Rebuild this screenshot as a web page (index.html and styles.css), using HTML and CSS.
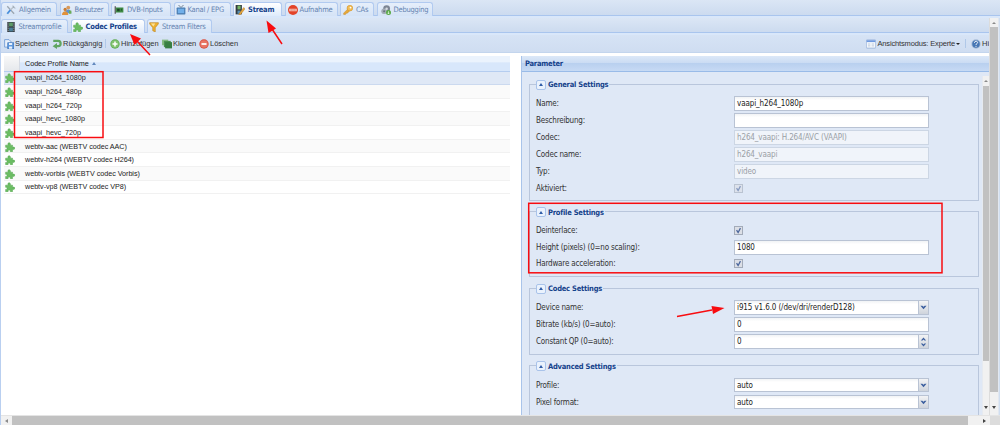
FILE: index.html
```html
<!DOCTYPE html>
<html lang="de">
<head>
    <meta charset="UTF-8">
    <title>Tvheadend</title>
    <link rel="stylesheet" href="styles.css">
</head>
<body>

    <!-- Icons -->
    <svg class="defs">
        <symbol id="i-tools" viewBox="0 0 16 16"><path d="M2 2l11 12" stroke="#9aa5b0" stroke-width="2"/><path d="M13 2L7 8" stroke="#b9c2cb" stroke-width="2.4"/><path d="M7 8l-5 6" stroke="#4a8fdb" stroke-width="3"/><path d="M11 1l1 3 3 1" fill="none" stroke="#9aa5b0" stroke-width="1.5"/></symbol>
        <symbol id="i-users" viewBox="0 0 16 16"><circle cx="10" cy="4" r="3" fill="#d99a5b"/><path d="M5 13c0-8 10-8 10 0z" fill="#5c93d4"/><circle cx="5" cy="7" r="2.6" fill="#c97c33"/><path d="M0 16c0-8 10-8 10 0z" fill="#e0913a"/><path d="M11 9h4v5h-4z" fill="#6fae54"/></symbol>
        <symbol id="i-card" viewBox="0 0 16 16"><path d="M1 2h2v12H1z" fill="#555"/><path d="M3 4h12v8H3z" fill="#3f8b45"/><path d="M5 6h4v4H5z" fill="#1f4526"/><path d="M11 6h2v3h-2z" fill="#255a2c"/></symbol>
        <symbol id="i-tv" viewBox="0 0 16 16"><path d="M4 0l4 4 4-4" fill="none" stroke="#596a7a" stroke-width="1.3"/><rect x="1" y="4" width="14" height="11" rx="1" fill="#4d7eb1"/><rect x="3" y="6" width="10" height="7" fill="#71afe9"/></symbol>
        <symbol id="i-film" viewBox="0 0 16 16"><path d="M2 0h12v16H2z" fill="#343c42"/><path d="M5 1h6v6H5z" fill="#5d9b67"/><path d="M5 9h6v6H5z" fill="#4d8099"/><path d="M3.5 1v14M12.5 1v14" stroke="#d8dde0" stroke-width="1" stroke-dasharray="1.5 1.5"/></symbol>
        <symbol id="i-filmedit" viewBox="0 0 16 16"><path d="M1 0h10v15H1z" fill="#343c42"/><path d="M4 1h5v6H4z" fill="#75b565"/><path d="M4 9h5v5H4z" fill="#5791b5"/><path d="M14 4l-7 9-1 3 3-1 7-9z" fill="#e8a93c" stroke="#b47626" stroke-width=".7"/></symbol>
        <symbol id="i-rec" viewBox="0 0 16 16"><circle cx="8" cy="8" r="8" fill="#e34328"/><path d="M2 6h12v4H2z" fill="#f5c9be"/><path d="M4 8h8" stroke="#d9583f" stroke-width="1.5" stroke-dasharray="2 1"/></symbol>
        <symbol id="i-key" viewBox="0 0 16 16"><path d="M8 6l-7 7v2h3l1-2h2l4-4z" fill="#e6a93a" stroke="#c98b26" stroke-width=".8"/><circle cx="11" cy="5" r="4.500" fill="#f2bd55" stroke="#d3952c"/><circle cx="12" cy="4" r="1.400" fill="#fff"/></symbol>
        <symbol id="i-bug" viewBox="0 0 16 16"><circle cx="9" cy="6" r="5.5" fill="#7d8694"/><circle cx="5" cy="10" r="4.5" fill="#a3abb6"/><circle cx="9" cy="6" r="2" fill="#d7dce2"/><circle cx="5" cy="10" r="1.6" fill="#69717e"/><circle cx="12" cy="12" r="4" fill="#58a945"/><path d="M12 10v4M10.500 12.500l1.500 1.800 1.500-1.800" stroke="#fff" fill="none"/></symbol>
        <symbol id="i-plugin" viewBox="0 0 16 16"><path d="M1 5h4C3 0 10 0 8.500 5H12v3.500c5-2 5 5 0 3V15.500H8.500c1-3.500-4.500-3.500-3.500 0H1V12c3 .5 3-4 0-3.500z" fill="#6bbd63" stroke="#55a450" stroke-width=".8"/></symbol>
        <symbol id="i-funnel" viewBox="0 0 16 16"><path d="M1 1h14v2l-5 6v7l-4-2V9L1 3z" fill="#edb030" stroke="#b98320" stroke-width=".9"/><path d="M3 2.500h7L7 7z" fill="#fbe29a"/></symbol>
        <symbol id="i-save" viewBox="0 0 16 16"><path d="M1 1h7l3 3v9H1z" fill="#e9f1fb" stroke="#5f8fcf" stroke-width="1.2"/><rect x="6" y="6" width="9.500" height="9.500" fill="#5e98de" stroke="#3c72b8"/><path d="M8 6.500h5v3H8zM8 12h5v3.500H8z" fill="#e8f1fc"/></symbol>
        <symbol id="i-undo" viewBox="0 0 16 16"><path d="M2 3h8c5 0 5 8.500 0 8.500H6" fill="none" stroke="#5fa562" stroke-width="3.600"/><path d="M8 6.500V16l-7-4.500z" fill="#5fa562"/></symbol>
        <symbol id="i-add" viewBox="0 0 16 16"><circle cx="8" cy="8" r="7.500" fill="#62ae55"/><circle cx="8" cy="8" r="6" fill="#82c26f"/><path d="M8 4v8M4 8h8" stroke="#fff" stroke-width="2.400"/></symbol>
        <symbol id="i-clone" viewBox="0 0 16 16"><path d="M0 1h10v9H0z" fill="#87bb83"/><path d="M3 3h11v10H3z" fill="#4d9150"/><path d="M5 5h11v10H5z" fill="#397f43"/></symbol>
        <symbol id="i-del" viewBox="0 0 16 16"><circle cx="8" cy="8" r="7.500" fill="#d9503f"/><circle cx="8" cy="8" r="6" fill="#e87564"/><path d="M4 8h8" stroke="#fff" stroke-width="2.800"/></symbol>
        <symbol id="i-view" viewBox="0 0 16 14"><rect x=".5" y=".5" width="15" height="13" rx="1" fill="#f7fafd" stroke="#7f9ed0"/><path d="M1 1h14v3H1z" fill="#6f9ae0"/><path d="M3 7h4M3 10h4M9 7h4M9 10h4" stroke="#a9bad2" stroke-width="1.200"/></symbol>
        <symbol id="i-help" viewBox="0 0 16 16"><circle cx="8" cy="8" r="7.500" fill="#a9bdd8"/><circle cx="8" cy="8" r="6" fill="#4777b5"/><path d="M5.500 6c0-3.500 5.500-3 5 0-.3 1.500-2.500 1.500-2.500 3.500M8 11v1.500" fill="none" stroke="#fff" stroke-width="1.600"/></symbol>
        <symbol id="i-down" viewBox="0 0 8 8"><path d="M.500 2h2.200L4 3.200 5.300 2h2.200L4 6z" fill="#3c5f9f"/></symbol>
    </svg>

    <!-- Main tabs -->
    <div class="tabs main-tabs">
        <div class="tab t-allgemein"><svg><use href="#i-tools"/></svg><span>Allgemein</span></div>
        <div class="tab t-benutzer"><svg><use href="#i-users"/></svg><span>Benutzer</span></div>
        <div class="tab t-dvb"><svg><use href="#i-card"/></svg><span>DVB-Inputs</span></div>
        <div class="tab t-kanal"><svg><use href="#i-tv"/></svg><span>Kanal / EPG</span></div>
        <div class="tab t-stream active"><svg><use href="#i-filmedit"/></svg><span>Stream</span></div>
        <div class="tab t-aufnahme"><svg><use href="#i-rec"/></svg><span>Aufnahme</span></div>
        <div class="tab t-cas"><svg><use href="#i-key"/></svg><span>CAs</span></div>
        <div class="tab t-debug"><svg><use href="#i-bug"/></svg><span>Debugging</span></div>
    </div>

    <div class="main">
        <div class="content">
            <div class="tabs sub-tabs">
                <div class="tab t-streamprofile"><svg><use href="#i-film"/></svg><span>Streamprofile</span></div>
                <div class="tab t-codec active"><svg><use href="#i-plugin"/></svg><span>Codec Profiles</span></div>
                <div class="tab t-filters"><svg><use href="#i-funnel"/></svg><span>Stream Filters</span></div>
            </div>

            <div class="toolbar">
                <div class="btn b-save"><svg><use href="#i-save"/></svg>Speichern</div>
                <div class="btn b-undo"><svg><use href="#i-undo"/></svg>Rückgängig</div>
                <div class="sep"></div>
                <div class="btn b-add"><svg><use href="#i-add"/></svg>Hinzufügen</div>
                <div class="btn b-clone"><svg><use href="#i-clone"/></svg>Klonen</div>
                <div class="btn b-del"><svg><use href="#i-del"/></svg>Löschen</div>
                <div class="fill"></div>
                <div class="btn b-view"><svg><use href="#i-view"/></svg>Ansichtsmodus: Experte<i class="caret"></i></div>
                <div class="sep"></div>
                <div class="btn b-help"><svg><use href="#i-help"/></svg>Hi</div>
            </div>

            <div class="panels">
                <div class="grid">
                    <div class="grid-head"><div class="head-icon"></div><div class="head-name">Codec Profile Name<i class="sort"></i></div></div>
                    <div class="row selected"><svg><use href="#i-plugin"/></svg>vaapi_h264_1080p</div>
                    <div class="row"><svg><use href="#i-plugin"/></svg>vaapi_h264_480p</div>
                    <div class="row"><svg><use href="#i-plugin"/></svg>vaapi_h264_720p</div>
                    <div class="row"><svg><use href="#i-plugin"/></svg>vaapi_hevc_1080p</div>
                    <div class="row"><svg><use href="#i-plugin"/></svg>vaapi_hevc_720p</div>
                    <div class="row"><svg><use href="#i-plugin"/></svg>webtv-aac (WEBTV codec AAC)</div>
                    <div class="row"><svg><use href="#i-plugin"/></svg>webtv-h264 (WEBTV codec H264)</div>
                    <div class="row"><svg><use href="#i-plugin"/></svg>webtv-vorbis (WEBTV codec Vorbis)</div>
                    <div class="row"><svg><use href="#i-plugin"/></svg>webtv-vp8 (WEBTV codec VP8)</div>
                </div>

                <div class="params">
                    <div class="params-head">Parameter</div>
                    <div class="params-body">
                        <div class="form">
                            <div class="set general">
                                <div class="legend"><i class="toggle"></i>General Settings</div>
                                <div class="field"><label>Name:</label><div class="input">vaapi_h264_1080p</div></div>
                                <div class="field"><label>Beschreibung:</label><div class="input"></div></div>
                                <div class="field"><label>Codec:</label><div class="input disabled">h264_vaapi: H.264/AVC (VAAPI)</div></div>
                                <div class="field"><label>Codec name:</label><div class="input disabled">h264_vaapi</div></div>
                                <div class="field"><label>Typ:</label><div class="input disabled">video</div></div>
                                <div class="field"><label>Aktiviert:</label><div class="check disabled"><svg viewBox="0 0 9 9"><path d="M2 4l2 3 3-5.500"/></svg></div></div>
                            </div>
                            <div class="set profile">
                                <div class="legend"><i class="toggle"></i>Profile Settings</div>
                                <div class="field"><label>Deinterlace:</label><div class="check"><svg viewBox="0 0 9 9"><path d="M2 4l2 3 3-5.500"/></svg></div></div>
                                <div class="field"><label>Height (pixels) (0=no scaling):</label><div class="input">1080</div></div>
                                <div class="field"><label>Hardware acceleration:</label><div class="check"><svg viewBox="0 0 9 9"><path d="M2 4l2 3 3-5.500"/></svg></div></div>
                            </div>
                            <div class="set codec">
                                <div class="legend"><i class="toggle"></i>Codec Settings</div>
                                <div class="field"><label>Device name:</label><div class="input combo">i915 v1.6.0 (/dev/dri/renderD128)</div><div class="trigger"><svg><use href="#i-down"/></svg></div></div>
                                <div class="field"><label>Bitrate (kb/s) (0=auto):</label><div class="input">0</div></div>
                                <div class="field"><label>Constant QP (0=auto):</label><div class="input combo">0</div><div class="trigger spin"><svg class="up"><use href="#i-down"/></svg><svg><use href="#i-down"/></svg></div></div>
                            </div>
                            <div class="set advanced">
                                <div class="legend"><i class="toggle"></i>Advanced Settings</div>
                                <div class="field"><label>Profile:</label><div class="input combo">auto</div><div class="trigger"><svg><use href="#i-down"/></svg></div></div>
                                <div class="field"><label>Pixel format:</label><div class="input combo">auto</div><div class="trigger"><svg><use href="#i-down"/></svg></div></div>
                            </div>
                        </div>
                        <div class="vscroll inner"><i class="arrow-up"></i><div class="thumb"></div><i class="arrow-down"></i></div>
                    </div>
                </div>
            </div>
        </div>
        <div class="vscroll outer"><i class="arrow-up"></i><div class="thumb"></div><i class="arrow-down"></i></div>
    </div>

    <div class="hscroll"><i class="arrow-left"></i><div class="thumb"></div><i class="arrow-right"></i><div class="corner"></div></div>

    <!-- Red markers over the page -->
    <svg class="marks" viewBox="0 0 1000 425">
        <rect x="14.500" y="71.700" width="88.500" height="65.800"/>
        <rect x="528.700" y="203.300" width="413.300" height="69.500"/>
        <path d="M282 44L272 29M150 55L137 41M677 316.500L712 310"/>
        <polygon points="266.500,20.500 276,28.500 268.500,33"/>
        <polygon points="130,34 141,38.500 134.500,45"/>
        <polygon points="724.500,308 711.500,306 713,314"/>
    </svg>

</body>
</html>
```
FILE: styles.css
```css
* {
    box-sizing: border-box;
}

body {
    margin: 0;
    width: 1000px;
    height: 425px;
    overflow: hidden;
    position: relative;
    display: flex;
    flex-direction: column;
    background: #d0def0;
    border-left: 1px solid #b9cff0;
    font-family: "DejaVu Sans Condensed", "DejaVu Sans", sans-serif;
    font-stretch: condensed;
    font-size: 7.5px;
    letter-spacing: -0.22px;
    color: #333;
    white-space: nowrap;
}

.defs {
    position: absolute;
    width: 0;
    height: 0;
}

/* Tabs */
.tabs {
    display: flex;
    align-items: flex-end;
    flex: none;
    background: linear-gradient(#dbe6f5, #cbdaef);
    border-bottom: 2px solid #d9e7fa;
}

.main-tabs {
    height: 18px;
    padding-top: 2px;
    box-shadow: inset 0 -1px 0 #a9c5ee;
}

.sub-tabs {
    height: 17px;
    box-shadow: inset 0 -1px 0 #a9c5ee;
}

.tab {
    display: flex;
    align-items: center;
    height: 14px;
    margin-right: 2.5px;
    padding-left: 4px;
    flex: none;
    border: 1px solid #b1caf0;
    border-bottom: 0;
    border-radius: 3px 3px 0 0;
    background: linear-gradient(#e6effb, #d5e3f6);
    color: #6483b1;
}

.tab svg {
    width: 10px;
    height: 10px;
    margin-right: 3px;
}

.tab.active {
    background: linear-gradient(#fff, #dfebfb);
    color: #15428b;
    font-weight: bold;
}

.t-allgemein { width: 56px; }
.t-benutzer { width: 49px; padding-left: 1px; }
.t-dvb { width: 60px; padding-left: 2px; }
.t-kanal { width: 57px; padding-left: 1px; }
.t-kanal svg { margin-right: 2px; }
.t-stream { width: 49px; padding-left: 1px; }
.t-aufnahme { width: 53px; padding-left: 2px; }
.t-aufnahme svg { margin-right: 2px; }
.t-cas { width: 34px; padding-left: 2px; }
.t-debug { width: 56px; padding-left: 3px; }
.t-streamprofile { width: 67px; }
.t-streamprofile svg { margin-right: 2.5px; }
.t-codec { width: 74px; padding-left: 1px; }
.t-filters { width: 65px; padding-left: 1px; }

/* Toolbar */
.main {
    display: flex;
    height: 397px;
    flex: none;
}

.content {
    width: 988px;
    overflow: hidden;
}

.toolbar {
    display: flex;
    align-items: center;
    height: 18px;
    padding-left: 3px;
    background: linear-gradient(#d6e3f5, #cfddf1);
    border-bottom: 1px solid #c3d5ed;
    font-family: "Liberation Sans", Arial, sans-serif;
    font-size: 7.5px;
    letter-spacing: -0.03px;
}

.btn {
    display: flex;
    align-items: center;
    flex: none;
}

.btn svg {
    width: 10px;
    height: 10px;
    margin-right: 1px;
}

.b-save { width: 48px; }
.b-undo { width: 53px; }
.b-add { width: 52px; margin-left: 4px; }
.b-clone { width: 37px; }
.b-view { margin-right: 5px; letter-spacing: -0.15px; }
.b-help { width: 18px; margin-left: 5px; }
.b-help svg { flex: none; }

.sep {
    width: 1px;
    height: 9px;
    background: #b0c8e8;
}

.fill {
    flex: 1;
}

.caret {
    margin-left: 1px;
    border: 2px solid transparent;
    border-top: 2.5px solid #222;
    border-bottom: 0;
}

/* Profile list */
.panels {
    display: flex;
    height: 362px;
    padding: 3px 0 0 3px;
    background: #fff;
}

.grid {
    width: 506px;
    margin-right: 11px;
    font-family: "Liberation Sans", Arial, sans-serif;
    font-size: 7.2px;
    letter-spacing: -0.03px;
    color: #222;
}

.grid-head {
    display: flex;
    height: 15.5px;
    border-bottom: 1px solid #b5cdf0;
}

.head-icon {
    width: 16px;
    background: linear-gradient(#f8f8f8, #e5e8ec);
    border-right: 1px solid #d5dbe5;
}

.head-name {
    flex: 1;
    display: flex;
    align-items: center;
    padding-left: 5px;
    background: linear-gradient(#ebf3fd 40%, #d8e7fb 45%);
}

.sort {
    margin-left: 3px;
    border: 2.5px solid transparent;
    border-bottom: 3px solid #6288bd;
    border-top: 0;
}

.row {
    display: flex;
    align-items: center;
    height: 13.65px;
    border-bottom: 1px solid #f1f1f1;
}

.row:nth-child(odd) {
    background: #fafafa;
}

.row svg {
    width: 10px;
    height: 10px;
    margin: 1px 10px 0 1px;
}

.row.selected {
    background: #dfe8f6;
    border-bottom: 1px solid #cbd9ef;
}

/* Parameter form */
.params {
    width: 468px;
    border-left: 1px solid #a9c4ea;
}

.params-head {
    height: 15.5px;
    padding: 0 0 0 3px;
    line-height: 15px;
    background: linear-gradient(#dce8f8, #cbdcf3 45%, #b9d0ef 50%, #c7daf4);
    border-bottom: 1px solid #99bbe8;
    color: #15428b;
    font-weight: bold;
}

.params-body {
    display: flex;
    height: 344px;
    background: #dfe8f6;
}

.form {
    width: 460px;
    padding: 12px 3px 0 7px;
    overflow: hidden;
}

.set {
    height: 117px;
    margin-bottom: 10.5px;
    border: 1px solid #b9c6dc;
    padding-left: 6px;
}

.set.profile { height: 66px; }
.set.codec { height: 67px; }
.set.advanced { height: 80px; margin-bottom: 0; }

.legend {
    display: flex;
    align-items: center;
    width: fit-content;
    height: 12px;
    margin-top: -6px;
    margin-bottom: 4.5px;
    padding: 0 1px 0 0;
    background: #dfe8f6;
    color: #15428b;
    font-weight: bold;
}

.toggle {
    width: 10px;
    height: 10px;
    margin-right: 2px;
    display: flex;
    align-items: center;
    justify-content: center;
    border: 1px solid #a9c3ea;
    border-radius: 2px;
    background: #eaf2fd;
}

.toggle::before {
    content: "";
    border: 2.5px solid transparent;
    border-bottom: 3px solid #2f5da8;
    border-top: 0;
}

.field {
    display: flex;
    align-items: center;
    height: 17px;
    font-size: 8px;
    letter-spacing: -0.2px;
}

.profile .field { height: 16.5px; }

.field label {
    width: 198px;
    flex: none;
}

.input {
    width: 195px;
    height: 14.5px;
    line-height: 13px;
    padding-left: 2px;
    flex: none;
    border: 1px solid #b9c3d4;
    background: linear-gradient(#f1f3f5, #fff 25%);
    color: #222;
    letter-spacing: -0.12px;
}

.input.disabled {
    background: #f0f4fa;
    border-color: #ccd6e4;
    color: #9a9fa6;
}

.input.combo {
    width: 184px;
    border-right: 0;
}

.trigger {
    width: 11px;
    height: 14.5px;
    display: flex;
    flex-direction: column;
    align-items: center;
    justify-content: center;
    border: 1px solid #b9c3d4;
    background: linear-gradient(#f2f3f5, #cfd4dc);
}

.trigger svg {
    width: 7px;
    height: 7px;
    flex: none;
}

.spin svg { height: 6px; }
.spin .up { transform: scaleY(-1); }

.check {
    width: 9px;
    height: 9px;
    border: 1px solid #a3abb9;
    background: #dcdfe6;
}

.check svg {
    display: block;
    width: 7px;
    height: 7px;
}

.check path {
    fill: none;
    stroke: #4a659c;
    stroke-width: 1.6;
}

.check.disabled {
    opacity: 0.6;
}

/* Scrollbars */
.vscroll {
    display: flex;
    flex-direction: column;
    align-items: center;
    background: #f1f1f1;
}

.vscroll .thumb {
    width: 100%;
    background: #c1c1c1;
}

.inner {
    width: 7px;
    margin-top: 4px;
    border-left: 1px solid #e6eaf0;
}

.inner .thumb { height: 275px; margin: 4px 0 45px; }
.inner .arrow-up, .outer .arrow-up { margin-top: 4px; }

.outer {
    width: 10px;
    border-left: 1px solid #dcdcdc;
    border-right: 1px solid #e2e8f1;
}

.outer .thumb { height: 365px; margin: 3px 0 14px; }

.arrow-up {
    border: 2px solid transparent;
    border-bottom: 2.5px solid #8a8a8a;
    border-top: 0;
}

.arrow-down {
    border: 2.5px solid transparent;
    border-top: 3px solid #444;
    border-bottom: 0;
}

.hscroll {
    display: flex;
    align-items: center;
    height: 10px;
    background: #f1f1f1;
    border-top: 1px solid #e4e4e4;
}

.hscroll .thumb {
    width: 956px;
    height: 100%;
    margin: 0 14.5px 0 4px;
    background: #c1c1c1;
}

.arrow-left {
    margin-left: 4px;
    border: 2px solid transparent;
    border-right: 3px solid #8a8a8a;
    border-left: 0;
}

.arrow-right {
    border: 2.5px solid transparent;
    border-left: 3px solid #444;
    border-right: 0;
}

.corner {
    flex: 1;
    height: 100%;
    margin-left: 4px;
    background: #dcdcdc;
}

/* Markers */
.marks {
    position: absolute;
    left: -1px;
    top: 0;
    width: 1000px;
    height: 425px;
}

.marks path,
.marks rect {
    fill: none;
    stroke: #f80c10;
    stroke-width: 1.5;
}

.marks polygon {
    fill: #f80c10;
}
```
